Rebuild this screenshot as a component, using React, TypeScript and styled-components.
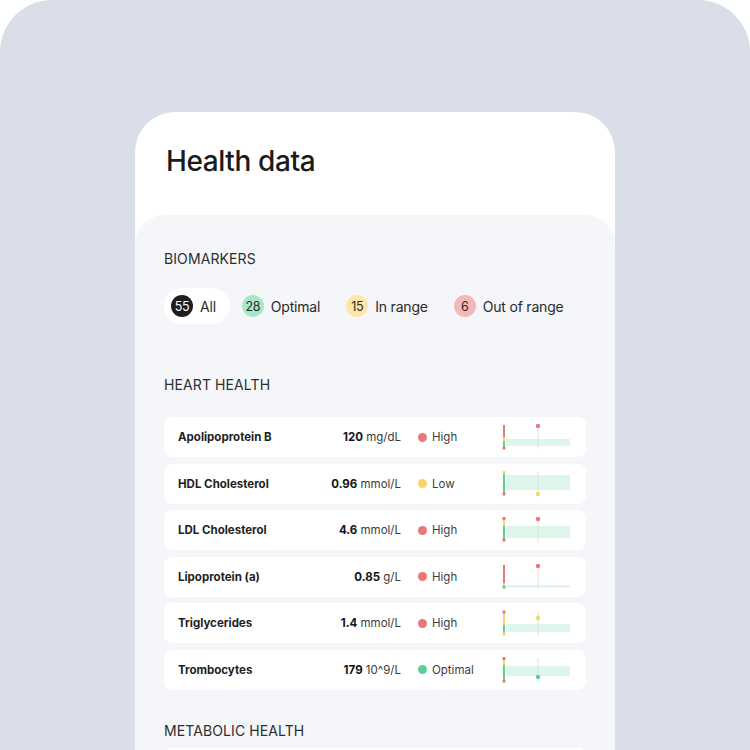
import React from "react";
import styled, { createGlobalStyle } from "styled-components";

const RED = "#e97878";
const YELLOW = "#f6d66a";
const GREEN = "#5ccf97";
const BAND = "#def5e9";

const GlobalStyle = createGlobalStyle`
  html, body {
    margin: 0;
    padding: 0;
    background: #ffffff;
  }
  body {
    font-family: Inter, "Noto Sans", sans-serif;
    color: #1c1c1c;
  }
`;

const Frame = styled.div`
  width: 750px;
  height: 750px;
  overflow: hidden;
  background: #d9dee8;
  border-radius: 52px 52px 0 0;
  display: flex;
  justify-content: center;
  align-items: flex-start;
  padding-top: 112px;
  box-sizing: border-box;
`;

const Card = styled.div`
  width: 480px;
  flex-shrink: 0;
  background: #ffffff;
  border-radius: 40px 40px 0 0;
  display: flex;
  flex-direction: column;
`;

const Title = styled.h1`
  margin: 0;
  flex-shrink: 0;
  height: 103px;
  box-sizing: border-box;
  padding: 32px 0 0 31px;
  font-size: 28px;
  font-weight: 500;
  letter-spacing: -0.4px;
  color: #1b1b1b;
`;

const Panel = styled.div`
  background: #f4f6fa;
  border-radius: 30px 30px 0 0;
  padding: 35px 29px 40px 29px;
`;

const SectionLabel = styled.div<{ $top?: number }>`
  font-size: 14px;
  font-weight: 400;
  color: #2e2e2e;
  letter-spacing: 0.1px;
  margin-top: ${(p) => p.$top ?? 0}px;
  line-height: 18px;
`;

const Filters = styled.div`
  display: flex;
  gap: 5px;
  margin-top: 20px;
`;

const Chip = styled.div<{ $active?: boolean }>`
  display: inline-flex;
  align-items: center;
  flex-shrink: 0;
  white-space: nowrap;
  gap: 7px;
  height: 36px;
  padding: 0 14px 0 7px;
  border-radius: 18px;
  background: ${(p) => (p.$active ? "#ffffff" : "transparent")};
  font-size: 14px;
  letter-spacing: -0.2px;
  color: #2a2a2a;
`;

const Badge = styled.span<{ $bg: string; $fg: string }>`
  width: 22px;
  height: 22px;
  border-radius: 50%;
  background: ${(p) => p.$bg};
  color: ${(p) => p.$fg};
  font-size: 12.5px;
  letter-spacing: -0.3px;
  display: inline-flex;
  align-items: center;
  justify-content: center;
`;

const List = styled.div<{ $top?: number }>`
  display: flex;
  flex-direction: column;
  gap: 6.5px;
  margin-top: ${(p) => p.$top ?? 23}px;
`;

const Row = styled.div`
  height: 40px;
  flex-shrink: 0;
  background: #ffffff;
  border-radius: 8px;
  display: grid;
  grid-template-columns: 140px 1fr 84px 70px;
  align-items: center;
  padding: 0 14px;
`;

const Name = styled.div`
  font-size: 11.5px;
  font-weight: 700;
  color: #1e1e1e;
`;

const Value = styled.div`
  justify-self: end;
  padding-right: 17px;
  font-size: 11.5px;
  color: #3a3a3a;
  b {
    font-weight: 700;
    color: #151515;
  }
`;

const Status = styled.div`
  display: flex;
  align-items: center;
  gap: 5px;
  font-size: 11.5px;
  color: #3d3d3d;
`;

const Dot = styled.span<{ $color: string }>`
  width: 9px;
  height: 9px;
  border-radius: 50%;
  background: ${(p) => p.$color};
`;

type Segment = { color: string; from: number; to: number };

type ChartSpec = {
  segments: Segment[];
  topDot?: { color: string; y: number };
  bottomDot?: { color: string; y: number };
  band: [number, number];
  marker: { color: string; y: number };
};

type Marker = {
  name: string;
  value: string;
  unit: string;
  status: "High" | "Low" | "Optimal";
  chart: ChartSpec;
};

const statusColor = { High: RED, Low: YELLOW, Optimal: GREEN };

const RangeChart = ({ spec }: { spec: ChartSpec }) => (
  <svg width="70" height="26" viewBox="0 0 70 26">
    <rect x="4" y={spec.band[0]} width="64" height={spec.band[1] - spec.band[0]} fill={BAND} />
    <line x1="36" y1="1" x2="36" y2="25" stroke="#dedfe2" strokeWidth="1" />
    {spec.segments.map((s, i) => (
      <rect key={i} x="1" y={s.from} width="2" height={s.to - s.from} fill={s.color} />
    ))}
    {spec.topDot && <circle cx="2" cy={spec.topDot.y} r="1.7" fill={spec.topDot.color} />}
    {spec.bottomDot && <circle cx="2" cy={spec.bottomDot.y} r="1.7" fill={spec.bottomDot.color} />}
    <circle cx="36" cy={spec.marker.y} r="2.2" fill={spec.marker.color} />
  </svg>
);

const heart: Marker[] = [
  {
    name: "Apolipoprotein B",
    value: "120",
    unit: "mg/dL",
    status: "High",
    chart: {
      segments: [
        { color: RED, from: 1, to: 13 },
        { color: YELLOW, from: 13, to: 17 },
        { color: GREEN, from: 17, to: 23 },
      ],
      bottomDot: { color: RED, y: 24 },
      band: [15, 22],
      marker: { color: RED, y: 2 },
    },
  },
  {
    name: "HDL Cholesterol",
    value: "0.96",
    unit: "mmol/L",
    status: "Low",
    chart: {
      segments: [{ color: GREEN, from: 2, to: 22 }],
      topDot: { color: YELLOW, y: 1.5 },
      bottomDot: { color: RED, y: 23 },
      band: [4, 19],
      marker: { color: YELLOW, y: 23 },
    },
  },
  {
    name: "LDL Cholesterol",
    value: "4.6",
    unit: "mmol/L",
    status: "High",
    chart: {
      segments: [
        { color: YELLOW, from: 3, to: 9 },
        { color: GREEN, from: 9, to: 22 },
      ],
      topDot: { color: RED, y: 1.5 },
      bottomDot: { color: RED, y: 23 },
      band: [9, 21],
      marker: { color: RED, y: 2 },
    },
  },
  {
    name: "Lipoprotein (a)",
    value: "0.85",
    unit: "g/L",
    status: "High",
    chart: {
      segments: [
        { color: RED, from: 1, to: 19 },
        { color: YELLOW, from: 19, to: 22 },
      ],
      bottomDot: { color: GREEN, y: 23 },
      band: [21, 23.5],
      marker: { color: RED, y: 2 },
    },
  },
  {
    name: "Triglycerides",
    value: "1.4",
    unit: "mmol/L",
    status: "High",
    chart: {
      segments: [
        { color: YELLOW, from: 3, to: 15 },
        { color: GREEN, from: 15, to: 23 },
      ],
      topDot: { color: RED, y: 2 },
      bottomDot: { color: YELLOW, y: 24 },
      band: [14, 22],
      marker: { color: YELLOW, y: 8 },
    },
  },
  {
    name: "Trombocytes",
    value: "179",
    unit: "10^9/L",
    status: "Optimal",
    chart: {
      segments: [
        { color: YELLOW, from: 2, to: 8 },
        { color: GREEN, from: 8, to: 23 },
      ],
      topDot: { color: RED, y: 1.5 },
      bottomDot: { color: RED, y: 24 },
      band: [9, 19],
      marker: { color: GREEN, y: 20 },
    },
  },
];

const filters = [
  { count: 55, label: "All", bg: "#1e1e1e", fg: "#ffffff", active: true },
  { count: 28, label: "Optimal", bg: "#a9e7c8", fg: "#2c2c2c" },
  { count: 15, label: "In range", bg: "#fbe8a8", fg: "#2c2c2c" },
  { count: 6, label: "Out of range", bg: "#f4b8b8", fg: "#2c2c2c" },
];

export default function App() {
  return (
    <>
      <GlobalStyle />
      <Frame>
        <Card>
          <Title>Health data</Title>
          <Panel>
            <SectionLabel>BIOMARKERS</SectionLabel>
            <Filters>
              {filters.map((f) => (
                <Chip key={f.label} $active={f.active}>
                  <Badge $bg={f.bg} $fg={f.fg}>{f.count}</Badge>
                  {f.label}
                </Chip>
              ))}
            </Filters>
            <SectionLabel $top={52}>HEART HEALTH</SectionLabel>
            <List>
              {heart.map((m) => (
                <Row key={m.name}>
                  <Name>{m.name}</Name>
                  <Value>
                    <b>{m.value}</b> {m.unit}
                  </Value>
                  <Status>
                    <Dot $color={statusColor[m.status]} />
                    {m.status}
                  </Status>
                  <RangeChart spec={m.chart} />
                </Row>
              ))}
            </List>
            <SectionLabel $top={32}>METABOLIC HEALTH</SectionLabel>
            <List $top={8}>
              <Row />
            </List>
          </Panel>
        </Card>
      </Frame>
    </>
  );
}
